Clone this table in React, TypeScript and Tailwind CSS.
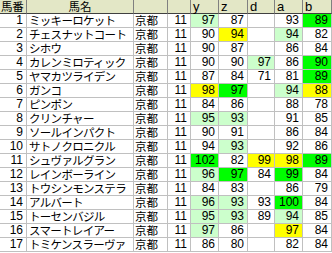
import React from "react";

type C = "" | "lg" | "g" | "y";
type Row = {
  no: number;
  name: string;
  n: number;
  y: [number, C];
  z: [number, C];
  d: [number | null, C];
  a: [number, C];
  b: [number, C];
};

const ROWS: Row[] = [
  { no: 1, name: "ミッキーロケット", n: 11, y: [97, "lg"], z: [87, ""], d: [null, ""], a: [93, ""], b: [89, "g"] },
  { no: 2, name: "チェスナットコート", n: 11, y: [90, ""], z: [94, "y"], d: [null, ""], a: [94, "lg"], b: [82, ""] },
  { no: 3, name: "シホウ", n: 11, y: [90, ""], z: [87, ""], d: [null, ""], a: [86, ""], b: [84, ""] },
  { no: 4, name: "カレンミロティック", n: 11, y: [90, ""], z: [90, ""], d: [97, "lg"], a: [86, ""], b: [90, "g"] },
  { no: 5, name: "ヤマカツライデン", n: 11, y: [87, ""], z: [84, ""], d: [71, ""], a: [81, ""], b: [89, "g"] },
  { no: 6, name: "ガンコ", n: 11, y: [98, "y"], z: [97, "g"], d: [null, ""], a: [94, "lg"], b: [88, "y"] },
  { no: 7, name: "ピンポン", n: 11, y: [84, ""], z: [86, ""], d: [null, ""], a: [88, ""], b: [78, ""] },
  { no: 8, name: "クリンチャー", n: 11, y: [95, "lg"], z: [93, "lg"], d: [null, ""], a: [91, ""], b: [85, ""] },
  { no: 9, name: "ソールインパクト", n: 11, y: [90, ""], z: [91, ""], d: [null, ""], a: [86, ""], b: [84, ""] },
  { no: 10, name: "サトノクロニクル", n: 11, y: [94, ""], z: [93, "lg"], d: [null, ""], a: [92, ""], b: [86, ""] },
  { no: 11, name: "シュヴァルグラン", n: 11, y: [102, "g"], z: [82, ""], d: [99, "y"], a: [98, "y"], b: [89, "g"] },
  { no: 12, name: "レインボーライン", n: 11, y: [96, "lg"], z: [97, "g"], d: [84, ""], a: [99, "g"], b: [84, ""] },
  { no: 13, name: "トウシンモンステラ", n: 11, y: [84, ""], z: [83, ""], d: [null, ""], a: [86, ""], b: [79, ""] },
  { no: 14, name: "アルバート", n: 11, y: [96, "lg"], z: [93, "lg"], d: [93, ""], a: [100, "g"], b: [84, ""] },
  { no: 15, name: "トーセンバジル", n: 11, y: [95, "lg"], z: [93, "lg"], d: [89, ""], a: [94, "lg"], b: [85, ""] },
  { no: 16, name: "スマートレイアー", n: 11, y: [97, "lg"], z: [86, ""], d: [null, ""], a: [97, "y"], b: [84, ""] },
  { no: 17, name: "トミケンスラーヴァ", n: 11, y: [86, ""], z: [80, ""], d: [null, ""], a: [82, ""], b: [84, ""] },
];

function bg(c: C) {
  if (c === "lg") return "bg-[#ccffcc]";
  if (c === "g") return "bg-[#00ff00]";
  if (c === "y") return "bg-[#ffff00]";
  return "bg-white";
}

const cell = "h-[14px] border-r border-b border-[#c0c0c0] leading-[13px] whitespace-nowrap";
const num = `${cell} pr-[3px] text-right font-['Liberation_Sans',sans-serif] text-[12px]`;
const head = "h-[14px] border-r border-b border-b-[#404040] border-r-[#808080] leading-[13px] bg-[#e3e7c6] whitespace-nowrap";

function Num({ v }: { v: [number | null, C] }) {
  return <div className={`${num} ${bg(v[1])}`}>{v[0] ?? ""}</div>;
}

export default function App() {
  return (
    <div
      className="w-[332px] h-[253px] overflow-hidden bg-white text-[12px] text-black"
      style={{ fontFamily: '"Noto Sans CJK JP", "Liberation Sans", sans-serif' }}
    >
      <div className="grid grid-cols-[27px_107px_34px_23px_28px_29px_27px_28px_29px]">
        <div className={`${head} pl-[1px] text-[11.5px] tracking-[-0.3px]`}>馬番</div>
        <div className={`${head} text-center text-[11.5px]`}>馬名</div>
        <div className={head}></div>
        <div className={head}></div>
        <div className={`${head} pl-[2px] font-['Liberation_Sans',sans-serif] text-[13px]`}>y</div>
        <div className={`${head} pl-[2px] font-['Liberation_Sans',sans-serif] text-[13px]`}>z</div>
        <div className={`${head} pl-[2px] font-['Liberation_Sans',sans-serif] text-[13px]`}>d</div>
        <div className={`${head} pl-[2px] font-['Liberation_Sans',sans-serif] text-[13px]`}>a</div>
        <div className={`${head} pl-[2px] font-['Liberation_Sans',sans-serif] text-[13px]`}>b</div>
        {ROWS.map((r) => (
          <React.Fragment key={r.no}>
            <div className={num}>{r.no}</div>
            <div className={`${cell} pl-[2px] text-[11.5px] tracking-[-0.7px] overflow-hidden`}>{r.name}</div>
            <div className={`${cell} pl-[1px] text-[11.5px]`}>京都</div>
            <div className={num}>{r.n}</div>
            <Num v={r.y} />
            <Num v={r.z} />
            <Num v={r.d} />
            <Num v={r.a} />
            <Num v={r.b} />
          </React.Fragment>
        ))}
      </div>
    </div>
  );
}
